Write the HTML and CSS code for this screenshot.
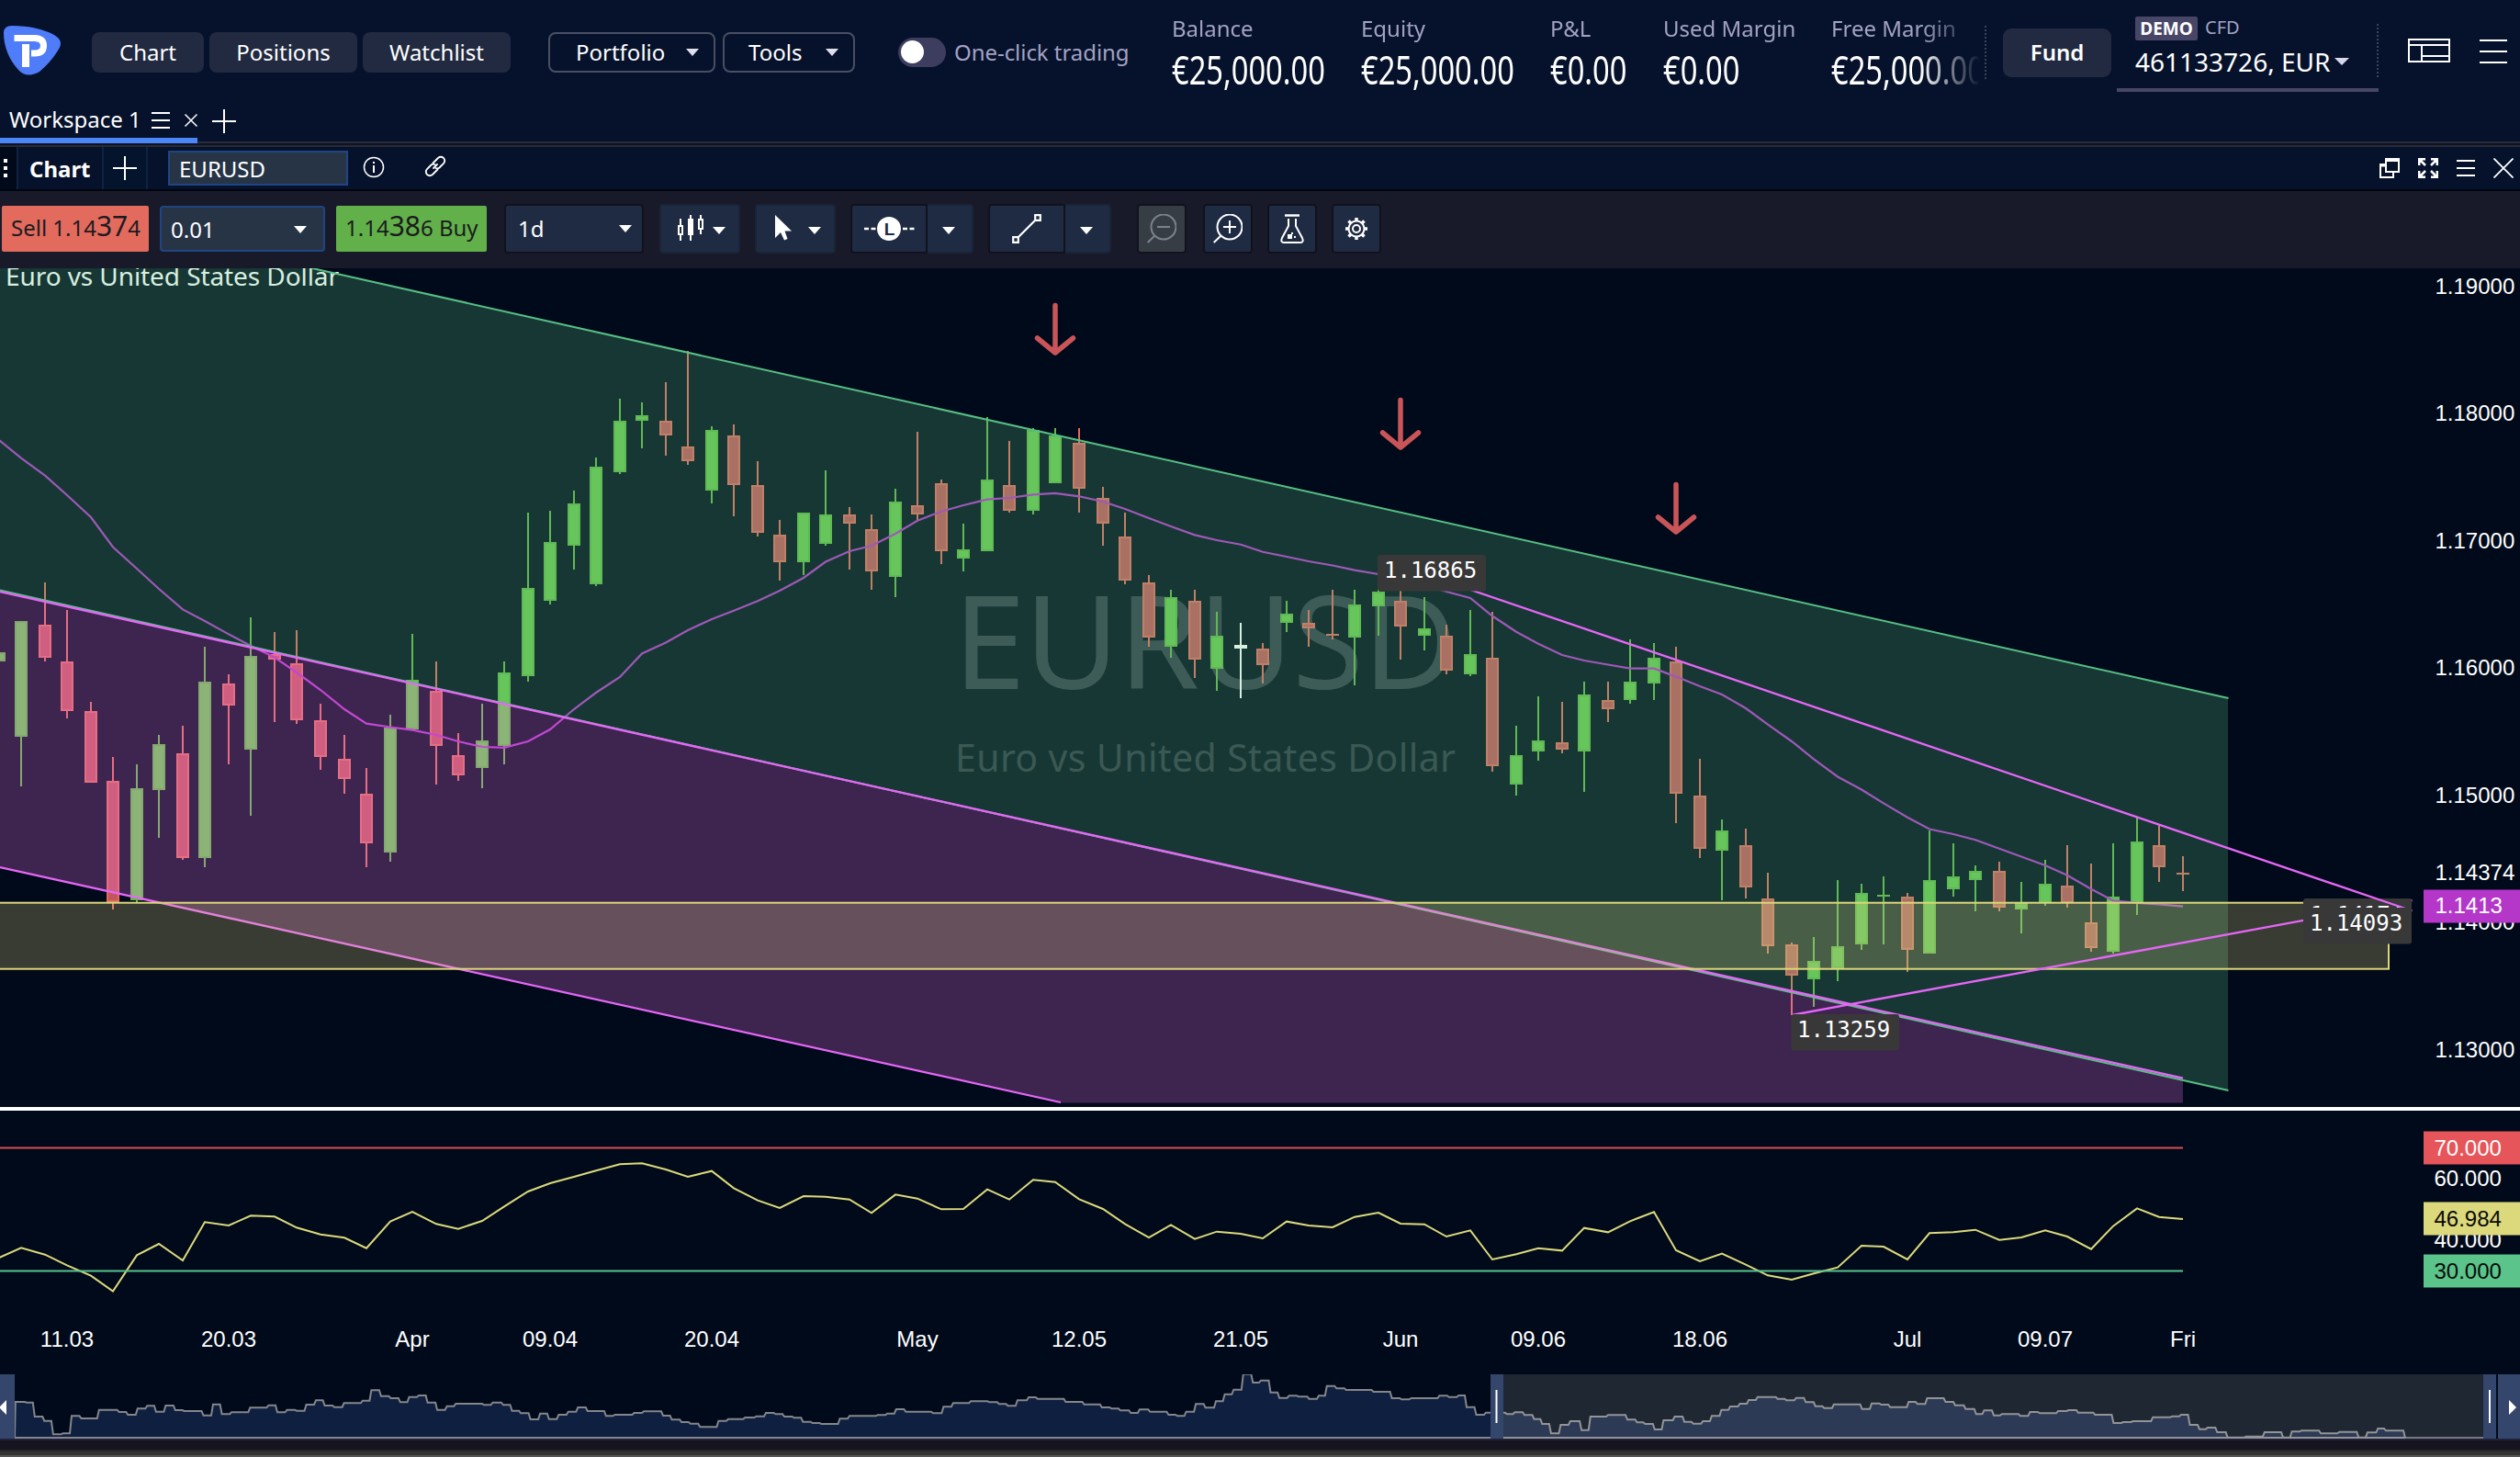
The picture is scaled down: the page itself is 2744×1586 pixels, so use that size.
FILE: index.html
```html
<!DOCTYPE html>
<html lang="en">
<head>
  <meta charset="UTF-8" />
  <meta name="viewport" content="width=device-width, initial-scale=1.0"/>
  <title>EURUSD - Workspace 1</title>
  <link rel="stylesheet" href="styles.css">
</head>
<body>
  <header class="topbar">
    <svg class="logo" width="64" height="56" viewBox="0 0 64 56">
      <path d="M0 9 Q0 1 9 1 C28 1 44 5 55 11 C63 16 64 21 59 28 C53 38 46 45 39 51 C31 56 22 56 16 49 C6 38 0 24 0 9Z" fill="#4f7cf8"/>
      <path d="M11.500 14.500 H34 Q43.500 15 43.500 22.500 Q43.500 31 34 31 H30" fill="none" stroke="#fff" stroke-width="7"/>
      <path d="M24 21 V46" fill="none" stroke="#fff" stroke-width="8"/>
    </svg>
    <nav class="main-nav">
      <a class="nav-btn w-chart">Chart</a>
      <a class="nav-btn w-positions">Positions</a>
      <a class="nav-btn w-watchlist">Watchlist</a>
    </nav>
    <div class="menus">
      <a class="menu-btn w-portfolio">Portfolio <i class="caret"></i></a>
      <a class="menu-btn w-tools">Tools <i class="caret"></i></a>
    </div>
    <div class="one-click"><span class="toggle"></span>One-click trading</div>

    <div class="stats">
      <div class="stat s-wide"><span class="label">Balance</span><span class="value">€25,000.00</span></div>
      <div class="stat s-wide"><span class="label">Equity</span><span class="value">€25,000.00</span></div>
      <div class="stat s-pl"><span class="label">P&amp;L</span><span class="value">€0.00</span></div>
      <div class="stat s-used"><span class="label">Used Margin</span><span class="value">€0.00</span></div>
      <div class="stat s-free"><span class="label">Free Margin</span><span class="value">€25,000.00</span></div>
    </div>
    <a class="fund">Fund</a>
    <div class="account">
      <div class="account-type"><b>DEMO</b><span>CFD</span></div>
      <div class="account-id">461133726, EUR<i class="caret caret-soft"></i></div>
    </div>
    <svg class="layout-icon" width="46" height="26" viewBox="0 0 46 26" fill="none" stroke="#fff" stroke-width="2">
      <path d="M1 1H45V25H1Z M1 7H45 M15 7V25 M15 19H45"/>
    </svg>
    <svg class="burger" width="30" height="26" viewBox="0 0 30 26" stroke="#fff" stroke-width="2">
      <path d="M0 1H30M0 13H30M0 25H30"/>
    </svg>
  </header>

  <div class="tabs">
    <div class="tab"><span>Workspace 1</span>
      <svg class="tab-menu" width="20" height="18" viewBox="0 0 20 18" stroke="#fff" stroke-width="2"><path d="M0 1H20M0 9H20M0 17H20"/></svg>
      <svg class="tab-close" width="14" height="14" viewBox="0 0 14 14" stroke="#fff" stroke-width="1.5"><path d="M.5 .5L13.5 13.5M13.5 .5L.5 13.5"/></svg>
    </div>
    <svg class="tab-add" width="26" height="26" viewBox="0 0 26 26" stroke="#fff" stroke-width="2"><path d="M0 13H26M13 0V26"/></svg>
  </div>

  <div class="panel-head">
    <div class="grip"><i></i><i></i><i></i></div>
    <div class="panel-title">Chart</div>
    <div class="panel-add">
      <svg width="26" height="26" viewBox="0 0 26 26" stroke="#fff" stroke-width="2"><path d="M0 13H26M13 0V26"/></svg>
    </div>
    <div class="symbol">EURUSD</div>
    <svg class="info" width="24" height="24" viewBox="0 0 24 24" fill="none" stroke="#fff">
      <circle cx="12" cy="12" r="10.5" stroke-width="1.5"/>
      <path d="M12 10V18M12 6V8" stroke-width="2"/>
    </svg>
    <svg class="link" width="24" height="24" viewBox="0 0 24 24" fill="none" stroke="#fff" stroke-width="1.800" stroke-linecap="round">
      <path d="M9.500 8.500L15 3Q18 .5 21 3Q23.500 6 21 9L16.500 13.500Q14.500 15 12.500 14"/>
      <path d="M14.500 15.500L9 21Q6 23.500 3 21Q.5 18 3 15L7.500 10.500Q9.500 9 11.500 10"/>
      <path d="M10 14L14 10"/>
    </svg>
    <div class="panel-icons">
      <svg width="22" height="22" viewBox="0 0 22 22" fill="none" stroke="#fff" stroke-width="2">
        <path d="M7 1H21V15H7Z M6 7H1V21H15V16"/><path d="M6 2.500H22M0 8H6" stroke-width="3"/>
      </svg>
      <svg width="22" height="22" viewBox="0 0 22 22" fill="none" stroke="#fff" stroke-width="2.500">
        <path d="M1.200 8V1.200H8M14 1.200H20.800V8M20.800 14V20.800H14M8 20.800H1.200V14M1.500 1.500L8 8M20.500 1.500L14 8M20.500 20.500L14 14M1.500 20.500L8 14"/>
      </svg>
      <svg width="20" height="18" viewBox="0 0 20 18" stroke="#fff" stroke-width="2"><path d="M0 1H20M0 9H20M0 17H20"/></svg>
      <svg width="22" height="22" viewBox="0 0 22 22" stroke="#fff" stroke-width="1.800"><path d="M.5 .5L21.500 21.500M21.500 .5L.5 21.500"/></svg>
    </div>
  </div>

  <div class="toolbar">
    <div class="sell">Sell 1.14<big>37</big>4</div>
    <div class="select amount">0.01<i class="caret"></i></div>
    <div class="buy">1.14<big>38</big>6 Buy</div>
    <div class="select period">1d<i class="caret"></i></div>
    <div class="tool drop g-candles">
      <svg width="28" height="28" viewBox="0 0 28 28" fill="none" stroke="#fff" stroke-width="2">
        <path d="M3 4V12M3 22V28M1 12H5V21H1Z M25 0V5M25 15V21M23 5H27V15H23Z M14 0V28"/><path d="M11 4H17V22H11Z" fill="#fff" stroke="none"/>
      </svg>
      <i class="caret"></i>
    </div>
    <div class="tool drop g-cursor">
      <svg width="20" height="30" viewBox="0 0 20 30"><path d="M1 1V26L7 20L11 28.500L14.500 27L11.500 18.500H19Z" fill="#fff"/></svg>
      <i class="caret"></i>
    </div>
    <div class="split g-line-type">
      <div class="tool dark">
        <svg width="56" height="28" viewBox="0 0 56 28">
          <path d="M1 14H13.500M43 14H55.500" stroke="#fff" stroke-width="2.500" stroke-dasharray="5 2.500"/>
          <circle cx="28" cy="14" r="13" fill="#fff"/>
          <text class="lot" x="28.500" y="20.500">L</text>
        </svg>
      </div>
      <div class="tool"><i class="caret"></i></div>
    </div>
    <div class="split g-draw">
      <div class="tool dark">
        <svg width="32" height="32" viewBox="0 0 32 32" fill="none" stroke="#fff" stroke-width="2.200">
          <path d="M1.200 25.200H6.800V30.800H1.200Z M25.200 1.200H30.800V6.800H25.200Z M7 25L25 7"/>
        </svg>
      </div>
      <div class="tool"><i class="caret"></i></div>
    </div>
    <div class="tool dark sq disabled g-zoom">
      <svg width="32" height="32" viewBox="0 0 32 32" fill="none" stroke="#7d838b" stroke-width="2">
        <circle cx="18" cy="14" r="13.500"/><path d="M8.500 23.500L.7 31M11 14H25"/>
      </svg>
    </div>
    <div class="tool dark sq g-sq1">
      <svg width="32" height="32" viewBox="0 0 32 32" fill="none" stroke="#fff" stroke-width="2">
        <circle cx="18" cy="14" r="13.500"/><path d="M8.500 23.500L.7 31M11 14H25M18 7V21"/>
      </svg>
    </div>
    <div class="tool dark sq g-sq2">
      <svg width="26" height="32" viewBox="0 0 26 32" fill="none" stroke="#fff" stroke-width="2">
        <path d="M5 1.500H21" stroke-width="2.500"/><path d="M9 5V13L2 26Q0 31 4 31H22Q26 31 24 26L17 13V5"/>
        <path d="M8 22H13V27H8Z M15 24H17V26H15Z M12 20H14V22H12Z" fill="#fff" stroke="none"/>
      </svg>
    </div>
    <div class="tool dark sq g-sq2">
      <svg width="26" height="26" viewBox="0 0 26 26" fill="none" stroke="#fff">
        <circle cx="13" cy="13" r="8.500" stroke-width="2"/><circle cx="13" cy="13" r="4" stroke-width="2"/>
        <path d="M13 1V5M13 21V25M1 13H5M21 13H25M4.500 4.500L7.300 7.300M18.700 18.700L21.500 21.500M4.500 21.500L7.300 18.700M18.700 7.300L21.500 4.500" stroke-width="3.500"/>
      </svg>
    </div>
  </div>

  <main class="chart">
    <!-- price pane -->
    <svg class="pane price" viewBox="0 292 2744 913">
      <defs>
        <g id="arrow" fill="none" stroke="#c95559" stroke-width="5.500" stroke-linecap="round" stroke-linejoin="round">
          <path d="M0 2.500V54M-19.500 38L0 54L19.500 38"/>
        </g>
      </defs>
      <text class="mark-symbol" x="1038" y="750" textLength="549">EURUSD</text>
      <text class="mark-name" x="1040" y="840" textLength="545">Euro vs United States Dollar</text>
      <text class="chart-title" x="6" y="311" textLength="363">Euro vs United States Dollar</text>
      <g id="candles"></g>
      <path id="average" class="average"/>

      <!-- channels -->
      <polygon class="channel-up" points="0,292 340,292 2426,760 2426,1187 0,642.500"/>
      <polygon class="channel-down" points="0,644 2377,1174 2377,1200.500 1155,1200.500 0,944"/>
      <path class="line-up" d="M340 292L2426.500 760M0 642.500L2426.500 1187"/>
      <path class="line-down" d="M0 644L2377 1173.700M0 944L1155 1200"/>

      <!-- support zone -->
      <rect class="zone" x="-4" y="982.700" width="2605" height="72"/>

      <use href="#arrow" x="1149" y="330"/>
      <use href="#arrow" x="1525" y="433"/>
      <use href="#arrow" x="1825" y="525"/>

      <path class="line-down" d="M1951 1105L2626.500 980"/>
      <rect class="tip" x="2508" y="978" width="118" height="40" rx="3"/>
      <text class="tip-text" x="2516" y="1004">1.14174</text>
      <path class="line-down" d="M1525 616L2626.500 991.500"/>
      <rect class="tip" x="2508" y="988" width="118" height="39.500" rx="3"/>
      <text class="tip-text" x="2515" y="1013">1.14093</text>
      <rect class="tip" x="1500" y="604" width="118" height="39.500" rx="3"/>
      <text class="tip-text" x="1507" y="629">1.16865</text>
      <rect class="tip" x="1950.500" y="1104" width="117.500" height="39.500" rx="3"/>
      <text class="tip-text" x="1957" y="1129">1.13259</text>

      <g class="scale">
        <text x="2651.500" y="320">1.19000</text>
        <text x="2651.500" y="458">1.18000</text>
        <text x="2651.500" y="597">1.17000</text>
        <text x="2651.500" y="735">1.16000</text>
        <text x="2651.500" y="873.500">1.15000</text>
        <text x="2651.500" y="957.500">1.14374</text>
        <text x="2651.500" y="1012">1.14000</text>
        <text x="2651.500" y="1150.500">1.13000</text>
        <rect x="2639" y="968.500" width="105" height="36" fill="#b437c9"/>
        <text x="2651.500" y="994">1.1413</text>
      </g>
    </svg>

    <!-- RSI pane and time scale -->
    <svg class="pane rsi" viewBox="0 1209 2744 287">
      <path class="rsi-line" id="rsi"/>
      <path d="M0 1249.500H2377" stroke="#d94f55" stroke-width="2"/>
      <path d="M0 1383.500H2377" stroke="#5ac18e" stroke-width="2"/>
      <g class="scale">
        <text x="2650.500" y="1291">60.000</text>
        <text x="2650.500" y="1357.500">40.000</text>
        <rect x="2639" y="1231.500" width="105" height="36" fill="#e65559"/>
        <text x="2650.500" y="1258">70.000</text>
        <rect x="2639" y="1308.500" width="105" height="36" fill="#dcd97c"/>
        <text class="ink" x="2650.500" y="1335">46.984</text>
        <rect x="2639" y="1365.500" width="105" height="36" fill="#5bc48a"/>
        <text class="ink" x="2650.500" y="1392">30.000</text>
      </g>
      <g class="scale dates" id="dates"></g>
    </svg>

    <!-- history navigator -->
    <svg class="pane navigator" viewBox="0 0 2744 70">
      <path id="history" class="history"/>
      <path d="M16 69H2704" stroke="#84868c" stroke-width="1.500"/>
      <rect x="1637" y="0" width="1067" height="70" fill="#fffff0" fill-opacity=".12"/>
      <g fill="#34466c">
        <rect x="0" y="0" width="16" height="70"/>
        <rect x="1623" y="0" width="14" height="70"/>
        <rect x="2704" y="0" width="14" height="70"/>
        <rect x="2720" y="0" width="24" height="70"/>
      </g>
      <path d="M1629.500 17V53M2711 17V53" stroke="#fff" stroke-width="2"/>
      <path d="M7 28V44L-1 36Z M2732 28V44L2740 36Z" fill="#fff"/>
    </svg>
  </main>
  <footer class="window-edge"></footer>

  <script src="chart.js"></script>
</body>
</html>
```
FILE: styles.css
```css
* {
  box-sizing: border-box;
}
body {
  margin: 0;
  width: 2744px;
  height: 1586px;
  overflow: hidden;
  display: flex;
  flex-direction: column;
  background: #000a1a;
  color: #fff;
  font-family: "Noto Sans", "Open Sans", sans-serif;
  font-size: 24px;
  line-height: 32px;
  white-space: nowrap;
}
svg {
  display: block;
  flex: none;
}
.caret {
  display: inline-block;
  border: 7px solid transparent;
  border-top: 8px solid #fff;
  border-bottom: 0;
}
.caret-soft {
  border-top-color: #d8d6ea;
  border-left-width: 8px;
  border-right-width: 8px;
  margin-left: 5px;
}

/* top bar */
.topbar {
  height: 114px;
  display: flex;
  align-items: flex-start;
  background: #06122b;
}
.logo {
  margin: 27px 32px 0 4px;
}
.main-nav {
  display: flex;
  gap: 6px;
  margin-top: 35px;
}
.nav-btn {
  height: 44px;
  line-height: 43px;
  text-align: center;
  border-radius: 8px;
  background: #212a40;
}
.w-chart { width: 122px; }
.w-positions { width: 161px; }
.w-watchlist { width: 161px; }
.menus {
  display: flex;
  gap: 8px;
  margin: 35px 0 0 41px;
}
.menu-btn {
  height: 44px;
  padding: 0 16px 0 28px;
  display: flex;
  align-items: center;
  justify-content: space-between;
  border: 2px solid #494f63;
  border-radius: 8px;
}
.menu-btn .caret {
  border-top-color: #e0e0ec;
}
.w-portfolio { width: 182px; }
.w-tools { width: 144px; padding-left: 26px; }
.one-click {
  display: flex;
  align-items: center;
  gap: 9px;
  height: 32px;
  margin: 41px 0 0 47px;
  color: #a3a2c4;
  width: 298px;
  letter-spacing: -.05px;
}
.toggle {
  width: 52px;
  height: 32px;
  border-radius: 16px;
  background: #3d3d60;
  padding: 3px;
}
.toggle::before {
  content: "";
  display: block;
  width: 25px;
  height: 25px;
  border-radius: 50%;
  background: #fff;
}
.stats {
  display: flex;
  width: 885px;
  height: 114px;
  overflow: hidden;
  padding-top: 15px;
  -webkit-mask-image: linear-gradient(to right, #000 815px, transparent 880px);
  mask-image: linear-gradient(to right, #000 815px, transparent 880px);
}
.stat {
  flex: none;
  display: flex;
  flex-direction: column;
}
.s-wide { width: 206px; }
.s-pl { width: 123px; }
.s-used { width: 183px; }
.s-free { width: 180px; }
.label {
  color: #a3a2c4;
}
.value {
  font-size: 44px;
  line-height: 56px;
  transform: scaleX(.742);
  transform-origin: 0 0;
}
.fund {
  position: relative;
  z-index: 0;
  width: 138px;
  height: 58px;
  padding: 3px 0 0 18px;
  margin-top: 28px;
  border-left: 2px dotted #3a4258;
  font-weight: 600;
  text-align: center;
  line-height: 52px;
}
.fund::before {
  content: "";
  position: absolute;
  z-index: -1;
  left: 18px;
  right: 0;
  top: 3px;
  height: 53px;
  border-radius: 9px;
  background: #212a40;
}
.account {
  width: 285px;
  height: 100px;
  margin-left: 6px;
  padding: 18px 0 0 20px;
  border-bottom: 4px solid #474667;
  background: repeating-linear-gradient(#3a4258 0 2px, transparent 2px 4px) right 26px / 2px 58px no-repeat;
}
.account-type {
  display: flex;
  gap: 8px;
  height: 26px;
  line-height: 26px;
}
.account-type b {
  width: 68px;
  text-align: center;
  font-size: 19px;
  border-radius: 2px;
  background: #474667;
}
.account-type span {
  font-size: 20px;
  line-height: 23px;
  color: #a3a2c4;
}
.account-id {
  font-size: 28px;
  line-height: 46px;
  display: flex;
  align-items: center;
}
.layout-icon {
  margin: 42px 0 0 32px;
}
.burger {
  margin: 43px 0 0 32px;
}

/* workspace tabs */
.tabs {
  height: 46px;
  display: flex;
  background: linear-gradient(#06122b 40px, #252a3d 40px 42px, #12121c 42px 44px, #252a3d 44px);
}
.tab {
  width: 215px;
  height: 42px;
  padding: 0 0 2px 10px;
  display: flex;
  align-items: center;
  border-bottom: 6px solid #4a86f7;
}
.tab span {
  margin-top: -2px;
}
.tab-menu {
  margin-left: 11px;
}
.tab-close {
  margin-left: auto;
}
.tab-add {
  margin: 5px 0 0 16px;
}

/* panel header */
.panel-head {
  height: 48px;
  display: flex;
  align-items: flex-start;
  background: #06122b;
  border-bottom: 2px solid #000510;
}
.grip {
  width: 20px;
  height: 46px;
  padding: 13px 0 0 4px;
  background: #000a1a;
  border-right: 2px solid #102240;
  display: flex;
  flex-direction: column;
  gap: 4px;
}
.grip i {
  width: 4px;
  height: 4px;
  background: #fff;
}
.panel-title {
  width: 93px;
  height: 46px;
  line-height: 47px;
  padding-left: 12px;
  font-weight: 700;
  border-right: 2px solid #102240;
}
.panel-add {
  width: 48px;
  height: 46px;
  padding: 10px;
  background: #04142c;
  border-right: 2px solid #102240;
}
.symbol {
  width: 196px;
  height: 38px;
  margin: 4px 0 0 22px;
  padding-left: 10px;
  line-height: 35px;
  background: #263446;
  border: 2px solid #1f4583;
}
.info {
  margin: 10px 0 0 16px;
}
.link {
  margin: 9px 0 0 43px;
}
.panel-icons {
  display: flex;
  align-items: center;
  gap: 20px;
  height: 44px;
  margin: 1px 7px 0 auto;
}

/* trading toolbar */
.toolbar {
  height: 84px;
  padding: 14px 0 0 2px;
  display: flex;
  background: #191a29;
}
.sell, .buy {
  height: 50px;
  margin-top: 2px;
  padding-left: 10px;
  line-height: 48px;
  border-radius: 2px;
  color: #1b1b20;
  overflow: hidden;
}
.sell big, .buy big {
  font-size: 30px;
  line-height: 30px;
}
.sell {
  width: 160px;
  background: #e26b5e;
}
.buy {
  width: 164px;
  background: #62b04a;
  margin-left: 12px;
}
.select {
  display: flex;
  align-items: center;
  justify-content: space-between;
}
.amount {
  width: 180px;
  height: 50px;
  margin: 2px 0 0 12px;
  padding: 1px 18px 0 10px;
  background: #263446;
  border: 2px solid #1f4583;
  border-radius: 4px;
}
.period {
  width: 152px;
  height: 54px;
  margin-left: 19px;
  padding: 0 11px 1px 13px;
  background: #1f2b42;
  border: 2px solid #10121e;
  border-radius: 4px;
}
.tool {
  height: 54px;
  display: flex;
  align-items: center;
  justify-content: center;
  background: #1f2b42;
  border: 2px solid #1a2438;
  border-radius: 4px;
}
.tool.dark {
  border-color: #10121e;
}
.drop {
  width: 88px;
  gap: 10px;
}
.drop .caret {
  margin-top: 4px;
}
.split .caret {
  margin: 3px 3px 0 0;
}
.g-candles { margin-left: 17px; padding-left: 3px; }
.g-candles svg { margin-top: -3px; }
.g-cursor { margin-left: 16px; gap: 17px; padding-left: 4px; }
.g-cursor svg { margin-top: -3px; }
.split {
  display: flex;
  width: 134px;
  margin-left: 16px;
}
.split .tool {
  width: 50px;
  border-left: 0;
  border-radius: 0 4px 4px 0;
}
.split .tool.dark {
  width: 84px;
  border-left: 2px solid #10121e;
  border-radius: 4px 0 0 4px;
}
.sq {
  width: 54px;
}
.g-zoom { margin-left: 28px; }
.g-sq1 { margin-left: 18px; }
.g-sq2 { margin-left: 16px; }
.disabled {
  background: #363d45;
}
.lot {
  font: 700 19px "Liberation Sans", Arial, sans-serif;
  text-anchor: middle;
  fill: #1f2b42;
}

/* chart */
.chart {
  height: 1274px;
  display: flex;
  flex-direction: column;
}
.pane {
  width: 2744px;
}
.price {
  height: 913px;
}
.rsi {
  height: 291px;
  border-top: 4px solid #fff;
}
.navigator {
  height: 70px;
}
.mark-symbol {
  font-size: 141.5px;
  fill: #353b48;
}
.mark-name {
  font-size: 41px;
  fill: #313744;
}
.chart-title {
  font-size: 28px;
  fill: #fff;
}
.up {
  fill: #6ac84e;
  stroke: #62b746;
}
.down {
  fill: #c3565a;
  stroke: #e26b5e;
}
.flat {
  fill: #fff;
  stroke: #fff;
}
.up, .down, .flat {
  stroke-width: 2;
}
.average {
  fill: none;
  stroke: #b437c9;
  stroke-width: 2.2;
}
.channel-up {
  fill: #5abf85;
  fill-opacity: .25;
}
.channel-down {
  fill: #f476f2;
  fill-opacity: .25;
}
.line-up {
  fill: none;
  stroke: #56bf85;
  stroke-width: 2;
}
.line-down {
  fill: none;
  stroke: #e766f8;
  stroke-width: 2.3;
}
.zone {
  fill: #e0d27e;
  fill-opacity: .25;
  stroke: #dcd67a;
  stroke-width: 2;
}
.tip {
  fill: #383838;
}
.tip-text {
  font-family: "DejaVu Sans Mono", monospace;
  font-size: 24px;
  fill: #fff;
}
.scale {
  font-family: "Liberation Sans", Arial, sans-serif;
  font-size: 24px;
}
.scale text {
  fill: #fff;
}
.scale .ink {
  fill: #0a0a0a;
}
.dates {
  text-anchor: middle;
}
.rsi-line {
  fill: none;
  stroke: #dcd97c;
  stroke-width: 2;
}
.history {
  fill: #0f1f40;
  stroke: #85868a;
  stroke-width: 2;
}
.window-edge {
  height: 20px;
  background: linear-gradient(#20213a 2px, #15141f 2px 12px, #262626 12px 14px, #333 14px 18px, #555 18px);
}
```
FILE: chart.js
```js
// one candle per bar: high, body top, body bottom, low, direction
const bars = [
  [710,710,720,720,'u'],[676,676,802,856,'u'],[634,680,716,720,'d'],[664,720,774,782,'d'],
  [764,774,852,852,'d'],[824,850,982,990,'d'],[832,858,980,982,'u'],[800,810,860,912,'u'],
  [790,820,934,936,'d'],[704,742,934,944,'u'],[734,744,768,832,'d'],[672,714,816,888,'u'],
  [688,712,718,786,'d'],[686,722,784,788,'d'],[766,784,824,838,'d'],[800,826,848,864,'d'],
  [836,864,918,944,'d'],[778,792,928,938,'u'],[690,740,794,794,'u'],[720,752,812,854,'d'],
  [798,822,844,850,'d'],[766,806,836,858,'u'],[720,732,812,832,'u'],[558,640,736,742,'u'],
  [556,590,654,658,'u'],[534,548,594,620,'u'],[498,508,636,638,'u'],[434,458,514,516,'u'],
  [438,452,458,488,'u'],[416,458,474,496,'d'],[382,486,502,506,'d'],[464,468,534,548,'u'],
  [462,474,528,562,'d'],[502,528,580,584,'d'],[566,582,612,632,'d'],[558,558,612,626,'u'],
  [512,560,592,594,'u'],[552,560,570,620,'d'],[560,576,622,642,'d'],[532,546,628,650,'u'],
  [470,550,560,566,'d'],[522,526,600,614,'d'],[570,598,608,622,'u'],[454,522,600,600,'u'],
  [480,528,556,558,'d'],[466,468,556,560,'u'],[466,474,526,526,'u'],[466,482,532,558,'d'],
  [530,542,570,594,'d'],[558,584,632,636,'d'],[626,634,694,704,'d'],[642,650,704,716,'u'],
  [642,654,718,738,'d'],[666,692,728,752,'u'],[678,702,706,760,'f'],[700,706,724,744,'d'],
  [654,668,678,688,'u'],[664,678,684,704,'d'],[642,690,692,696,'d'],[642,658,694,746,'u'],
  [640,644,660,692,'u'],[630,654,682,718,'d'],[650,684,692,708,'u'],[680,692,730,734,'d'],
  [664,712,734,736,'u'],[666,716,834,840,'d'],[790,822,854,866,'u'],[758,806,818,828,'u'],
  [764,808,816,820,'d'],[742,756,818,862,'u'],[742,762,772,786,'d'],[696,742,762,766,'u'],
  [700,716,744,762,'u'],[704,720,864,896,'d'],[826,866,924,934,'d'],[892,904,926,980,'u'],
  [902,920,966,978,'d'],[950,978,1030,1038,'d'],[1026,1028,1062,1105,'d'],[1020,1046,1066,1096,'u'],
  [958,1030,1054,1068,'u'],[962,972,1028,1034,'u'],[954,974,976,1028,'u'],[972,976,1034,1058,'d'],
  [904,958,1038,1038,'u'],[918,954,968,976,'u'],[942,948,958,992,'u'],[938,948,988,992,'d'],
  [960,983,990,1016,'u'],[936,962,983,986,'u'],[920,964,983,988,'d'],[940,1004,1032,1036,'d'],
  [918,976,1036,1038,'u'],[890,916,983,996,'u'],[898,920,944,960,'d'],[932,950,952,970,'d']
];

const average = [
  479,498.6,517.7,539,563,595.5,619,641,663.4,676,690.4,703,715.6,732,751,772,787.7,791.5,794.7,
  800,807,813,813.8,807,794,772,754,737,711.4,699.5,686,674,664.7,654.3,643,629,611.5,600,594,581,
  566.7,556.7,550,543.7,542,538.4,536.8,540.3,546,554,564,573,582.4,588,592.7,600.8,606,611,615.5,
  620.7,625,631,637,644,651,670.5,687.7,700.7,713,719,723.5,727.7,727.7,736.6,747,756,771,788.7,
  807,826.4,845.5,859.5,874.4,889.7,902.5,908,914.3,923.8,932.5,942,952.7,967.7,980.4,982.8,984.3,986.7
];

const rsi = [
  507,475,497,532,566,617,499,462,516,391,402,370,373,409,431,442,476,389,357,397,413,387,340,291,
  264,243,223,202,199,219,243,224,280,320,345,306,308,317,361,301,314,349,348,284,317,253,260,316,
  348,397,441,400,446,422,429,444,389,402,408,374,360,396,398,438,418,513,496,476,484,410,424,388,
  358,483,519,494,530,565,579,559,539,468,471,513,427,424,416,449,441,418,438,479,404,346,374,381
];

// labels sit under the bar with the same index
const dates = [
  [3,'11.03'],[10,'20.03'],[18,'Apr'],[24,'09.04'],[31,'20.04'],[40,'May'],[47,'12.05'],
  [54,'21.05'],[61,'Jun'],[67,'09.06'],[74,'18.06'],[83,'Jul'],[89,'09.07'],[95,'Fri']
];

// navigator steps: start, level
const history = [
  [18,978],[32,980],[42,1026],[54,1040],[65,1084],[77,1081],[88,1024],[100,1032],[122,1004],[147,1011],
  [158,1020],[170,1000],[182,991],[193,1010],[205,990],[217,1005],[228,1008],[252,1022],[264,986],
  [275,1018],[287,1012],[310,997],[333,989],[344,1012],[356,1004],[368,1007],[380,987],[392,973],
  [403,990],[415,995],[427,982],[450,974],[461,940],[473,959],[485,966],[497,979],[508,962],[520,957],
  [531,980],[543,1004],[555,992],[566,984],[601,988],[612,980],[625,988],[636,1007],[647,1015],
  [659,1035],[671,1016],[682,1034],[694,1020],[706,1010],[718,996],[730,1008],[753,1024],[764,1020],
  [788,1014],[800,1009],[824,1023],[835,1036],[847,1044],[858,1049],[870,1060],[893,1040],[905,1034],
  [926,1029],[940,1025],[952,1014],[964,1018],[975,1026],[987,1030],[998,1043],[1010,1047],[1021,1050],
  [1044,1033],[1056,1024],[1091,1021],[1103,1016],[1114,1002],[1126,1010],[1160,1015],[1173,994],
  [1185,982],[1207,976],[1230,979],[1242,985],[1253,991],[1265,973],[1279,963],[1290,968],[1325,978],
  [1348,986],[1370,996],[1382,1000],[1393,1006],[1406,1014],[1417,1003],[1430,1010],[1453,1020],
  [1464,1024],[1475,1010],[1487,985],[1499,997],[1512,976],[1523,953],[1534,938],[1546,887],[1558,915],
  [1568,908],[1580,947],[1591,965],[1603,958],[1615,961],[1628,968],[1640,958],[1650,926],[1662,934],
  [1674,939],[1708,945],[1731,966],[1743,970],[1755,966],[1790,958],[1802,962],[1814,957],[1824,995],
  [1836,1020],[1848,1013],[1874,1018],[1884,1012],[1896,1021],[1908,1034],[1918,1050],[1929,1081],
  [1941,1053],[1953,1041],[1967,1070],[1978,1026],[2000,1021],[2024,1036],[2036,1045],[2046,1050],
  [2058,1068],[2069,1038],[2083,1026],[2095,1043],[2106,1049],[2118,1041],[2129,1024],[2141,1004],
  [2152,993],[2164,984],[2175,972],[2186,962],[2211,968],[2222,973],[2234,965],[2246,979],[2258,992],
  [2269,998],[2281,986],[2316,1001],[2328,983],[2340,987],[2351,995],[2374,978],[2385,985],[2397,966],
  [2420,978],[2432,989],[2445,1001],[2458,1018],[2468,1006],[2480,1022],[2490,1018],[2513,1024],
  [2525,1011],[2537,1015],[2560,1008],[2573,1005],[2585,1013],[2606,1020],[2629,1047],[2641,1044],
  [2653,1041],[2678,1028],[2702,1025],[2713,1020],[2724,1053],[2736,1067],[2746,1062],[2758,1077],
  [2771,1094],[2794,1091],[2817,1077],[2840,1094],[2851,1075],[2863,1072],[2887,1081],[2910,1076],
  [2934,1094],[2945,1078],[2958,1065],[2968,1072],[2992,1096]
];

const barX = i => 2 * Math.round(12.515 * i - 1.2) + 1;
const names = { u: 'up', d: 'down', f: 'flat' };

document.getElementById('candles').innerHTML = bars.map(([high, top, bottom, low, dir], i) => {
  const x = barX(i);
  const h = Math.max(bottom - top - 2, 0.01);
  return `<g class="${names[dir]}"><path d="M${x} ${high}V${low}"/>` +
    `<rect x="${x - 6}" y="${top + 1}" width="12" height="${h}"/></g>`;
}).join('');

function line(points) {
  return 'M' + points.map(p => p.join(' ')).join('L');
}

document.getElementById('average').setAttribute('d', line(average.map((y, i) => [barX(i), y])));
document.getElementById('rsi').setAttribute('d', line(rsi.map((v, i) => [barX(i), 1200 + v / 3])));

document.getElementById('dates').innerHTML =
  dates.map(([i, label]) => `<text x="${barX(i)}" y="1466">${label}</text>`).join('');

let d = 'M16 69';
history.forEach(([x, v], i) => {
  const y = ((v - 888) / 3).toFixed(1);
  const next = history[i + 1];
  d += `L${(x * 0.875 + 1).toFixed(1)} ${y}`;
  if (next) d += `L${(next[0] * 0.875 - 1).toFixed(1)} ${y}`;
});
document.getElementById('history').setAttribute('d', d + 'V69Z');
```
